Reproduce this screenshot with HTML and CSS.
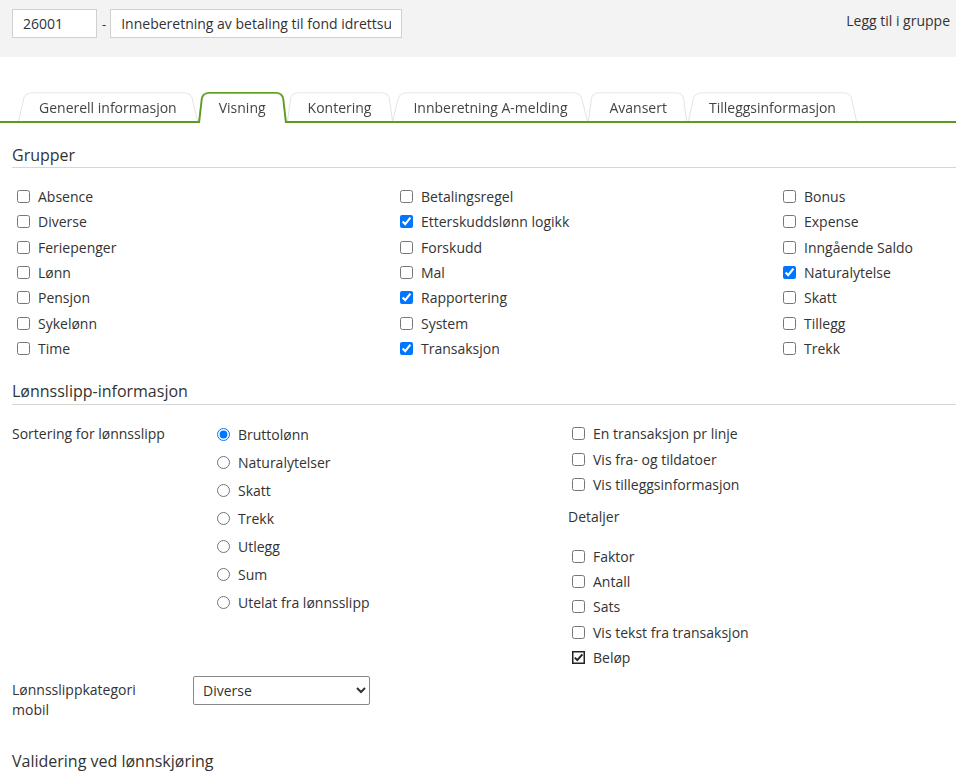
FILE: index.html
```html
<!DOCTYPE html>
<html lang="no">
<head>
    <meta charset="UTF-8">
    <title>Lønnsart 26001</title>
    <link rel="stylesheet" href="styles.css">
</head>
<body>
    <div class="topbar">
        <div class="topbar-fields">
            <input type="text" class="field field-code" value="26001">
            <span class="dash">-</span>
            <input type="text" class="field field-name" value="Inneberetning av betaling til fond idrettsutøvere">
        </div>
        <a class="group-link">Legg til i gruppe</a>
    </div>

    <ul class="tabs">
        <li class="tab">Generell informasjon</li>
        <li class="tab active">Visning</li>
        <li class="tab">Kontering</li>
        <li class="tab">Innberetning A-melding</li>
        <li class="tab">Avansert</li>
        <li class="tab">Tilleggsinformasjon</li>
    </ul>

    <div class="content">
        <h2 class="section-title">Grupper</h2>
        <div class="groups">
            <div class="col">
                <label class="check"><input type="checkbox">Absence</label>
                <label class="check"><input type="checkbox">Diverse</label>
                <label class="check"><input type="checkbox">Feriepenger</label>
                <label class="check"><input type="checkbox">Lønn</label>
                <label class="check"><input type="checkbox">Pensjon</label>
                <label class="check"><input type="checkbox">Sykelønn</label>
                <label class="check"><input type="checkbox">Time</label>
            </div>
            <div class="col">
                <label class="check"><input type="checkbox">Betalingsregel</label>
                <label class="check"><input type="checkbox" checked>Etterskuddslønn logikk</label>
                <label class="check"><input type="checkbox">Forskudd</label>
                <label class="check"><input type="checkbox">Mal</label>
                <label class="check"><input type="checkbox" checked>Rapportering</label>
                <label class="check"><input type="checkbox">System</label>
                <label class="check"><input type="checkbox" checked>Transaksjon</label>
            </div>
            <div class="col">
                <label class="check"><input type="checkbox">Bonus</label>
                <label class="check"><input type="checkbox">Expense</label>
                <label class="check"><input type="checkbox">Inngående Saldo</label>
                <label class="check"><input type="checkbox" checked>Naturalytelse</label>
                <label class="check"><input type="checkbox">Skatt</label>
                <label class="check"><input type="checkbox">Tillegg</label>
                <label class="check"><input type="checkbox">Trekk</label>
            </div>
        </div>

        <h2 class="section-title second">Lønnsslipp-informasjon</h2>
        <div class="payslip">
            <div class="form-label">Sortering for lønnsslipp</div>
            <div class="radios">
                <label class="radio"><input type="radio" name="sort" checked>Bruttolønn</label>
                <label class="radio"><input type="radio" name="sort">Naturalytelser</label>
                <label class="radio"><input type="radio" name="sort">Skatt</label>
                <label class="radio"><input type="radio" name="sort">Trekk</label>
                <label class="radio"><input type="radio" name="sort">Utlegg</label>
                <label class="radio"><input type="radio" name="sort">Sum</label>
                <label class="radio"><input type="radio" name="sort">Utelat fra lønnsslipp</label>
            </div>
            <div class="options">
                <label class="check"><input type="checkbox">En transaksjon pr linje</label>
                <label class="check"><input type="checkbox">Vis fra- og tildatoer</label>
                <label class="check"><input type="checkbox">Vis tilleggsinformasjon</label>
                <div class="sub-title">Detaljer</div>
                <label class="check"><input type="checkbox">Faktor</label>
                <label class="check"><input type="checkbox">Antall</label>
                <label class="check"><input type="checkbox">Sats</label>
                <label class="check"><input type="checkbox">Vis tekst fra transaksjon</label>
                <label class="check"><span class="fixed-check"><svg viewBox="0 0 13 13" width="13" height="13"><rect x="0.75" y="0.75" width="11.5" height="11.5" fill="#fff" stroke="#222" stroke-width="1.5"/><path d="M2.8 6.6 L5.3 9.1 L10.4 3.4" fill="none" stroke="#222" stroke-width="2"/></svg></span>Beløp</label>
            </div>
        </div>

        <div class="mobile-row">
            <div class="form-label narrow">Lønnsslippkategori mobil</div>
            <select class="select">
                <option>Diverse</option>
            </select>
        </div>

        <h2 class="section-title plain">Validering ved lønnskjøring</h2>
    </div>
</body>
</html>
```

FILE: styles.css
```css
/* Visning tab */
body, html {
    margin: 0;
    padding: 0;
    font-family: 'Open Sans', 'Noto Sans', sans-serif;
    font-size: 14px;
    color: #333;
    background-color: #fff;
}

/* Top bar */
.topbar {
    background-color: #f3f3f3;
    height: 57px;
    display: flex;
    justify-content: space-between;
    align-items: flex-start;
    padding: 9px 6px 0 12px;
    box-sizing: border-box;
}

.topbar-fields {
    display: flex;
    align-items: center;
}

.field {
    height: 29px;
    box-sizing: border-box;
    border: 1px solid #d0d0d0;
    background: #fff;
    font-family: inherit;
    font-size: 14px;
    color: #333;
    padding: 0 10px;
    outline: none;
}

.field-code {
    width: 85px;
}

.field-name {
    width: 292px;
    text-overflow: clip;
}

.dash {
    margin: 0 4px 0 5px;
    font-size: 13px;
}

.group-link {
    font-size: 14px;
    color: #333;
    margin-top: 2px;
}

/* Tabs */
.tabs {
    list-style: none;
    margin: 33px 0 0;
    padding: 0 0 0 18px;
    display: flex;
    border-bottom: 2px solid #5e9a1e;
    height: 31px;
}

.tab {
    position: relative;
    height: 31px;
    line-height: 31px;
    padding: 2px 21px 0;
    box-sizing: border-box;
    color: #444;
    font-size: 14px;
    z-index: 1;
}

.tab::before {
    content: '';
    position: absolute;
    top: 0;
    left: 0;
    right: 0;
    bottom: 0;
    border: 1px solid #e2e2e2;
    border-bottom: none;
    border-radius: 7px 7px 0 0;
    background: #fff;
    transform: perspective(40px) rotateX(6deg);
    transform-origin: bottom;
    z-index: -1;
}

.tab.active {
    z-index: 2;
    height: 33px;
}

.tab.active::before {
    top: -1px;
    bottom: 0;
    left: 0;
    right: 0;
    border: 2px solid #5e9a1e;
    border-bottom: none;
    border-radius: 8px 8px 0 0;
}

/* Content */
.content {
    padding: 0 0 0 12px;
}

.section-title {
    font-size: 16px;
    font-weight: normal;
    color: #333;
    margin: 21px 0 0;
    padding-bottom: 1px;
    line-height: 22px;
    border-bottom: 1px solid #d6d6d6;
}

.section-title.second {
    margin-top: 19px;
    padding-bottom: 2px;
}

.section-title.plain {
    border-bottom: none;
    margin-top: 30px;
}

.groups {
    display: grid;
    grid-template-columns: 383px 383px 1fr;
    padding-top: 16px;
}

.col {
    display: flex;
    flex-direction: column;
}

.check, .radio {
    display: flex;
    align-items: center;
    height: 25.33px;
    color: #333;
}

.check input, .radio input {
    margin: 0 8px 0 5px;
    width: 13px;
    height: 13px;
}

.radio {
    height: 28.1px;
}

.fixed-check {
    display: inline-flex;
    margin: 0 8px 0 5px;
}

/* Payslip section */
.payslip {
    display: grid;
    grid-template-columns: 200px 355px 1fr;
    padding-top: 16px;
}

.form-label {
    line-height: 20px;
    padding-top: 3px;
}

.form-label.narrow {
    width: 160px;
    padding-top: 3px;
}

.radios {
    display: flex;
    flex-direction: column;
    margin-top: -1px;
}

.options {
    display: flex;
    flex-direction: column;
}

.options .check {
    height: 25.2px;
}

.sub-title {
    padding: 9px 0 0 1px;
    height: 36px;
    box-sizing: border-box;
    line-height: 22px;
    margin-bottom: 11px;
}

.mobile-row {
    display: flex;
    align-items: flex-start;
    margin-top: 6px;
}

.mobile-row .form-label {
    padding-top: 4px;
}

.select {
    margin-left: 21px;
    width: 177px;
    height: 29px;
    font-family: inherit;
    font-size: 14px;
    color: #333;
    border: 1px solid #888;
    border-radius: 2px;
    background: #fff;
    padding: 0 5px;
}
```
